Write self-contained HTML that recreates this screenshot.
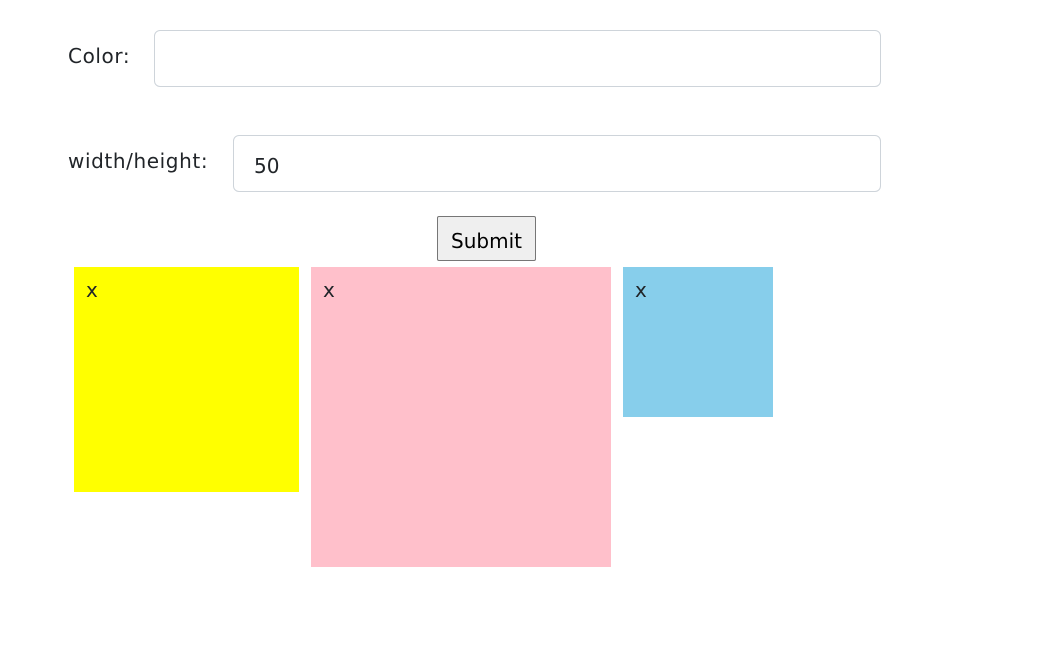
<!DOCTYPE html>
<html><head><style>
body{margin:0;background:#fff;font-family:"DejaVu Sans","Liberation Sans",sans-serif;color:#212529;width:1038px;height:669px;position:relative;overflow:hidden}
.lbl{position:absolute;font-size:20px;letter-spacing:0.6px}
.inp{position:absolute;border:1px solid #ced4da;border-radius:6px;background:#fff;box-sizing:border-box;font-size:20px;padding-left:20px;line-height:61px}
.btn{position:absolute;left:437px;top:216px;width:99px;height:45px;box-sizing:border-box;border:1px solid #767676;border-radius:2px;background:#efefef;font-size:20px;text-align:center;line-height:48px;color:#000}
.box{position:absolute;font-size:20px;box-sizing:border-box;padding:11px 12px}
</style></head><body>
<div class="lbl" style="left:68px;top:44px">Color:</div>
<div class="inp" style="left:154px;top:30px;width:727px;height:57px"></div>
<div class="lbl" style="left:68px;top:149px">width/height:</div>
<div class="inp" style="left:233px;top:135px;width:648px;height:57px">50</div>
<div class="btn">Submit</div>
<div class="box" style="left:74px;top:267px;width:225px;height:225px;background:#ffff00">x</div>
<div class="box" style="left:311px;top:267px;width:300px;height:300px;background:#ffc0cb">x</div>
<div class="box" style="left:623px;top:267px;width:150px;height:150px;background:#87ceeb">x</div>
</body></html>
